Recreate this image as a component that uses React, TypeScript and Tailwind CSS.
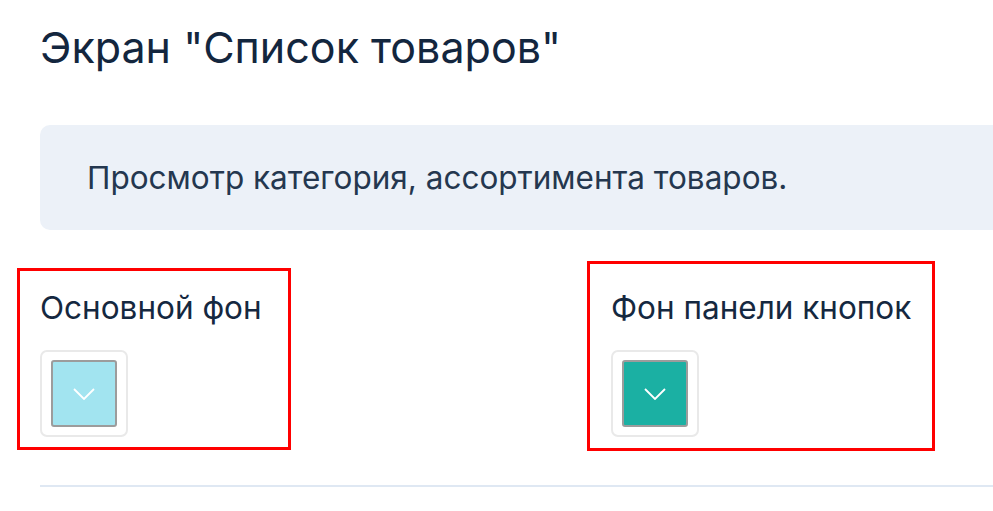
interface ColorFieldProps {
  label: string;
  color: string;
  frame: string;
}

function ColorField({ label, color, frame }: ColorFieldProps) {
  return (
    <div className="relative">
      {/* red annotation frame */}
      <div className={`absolute border-[3px] border-[#ff0000] pointer-events-none ${frame}`} />
      <div className="text-[31.5px] leading-[40px] text-[#152840]">{label}</div>
      <div className="mt-[22px] w-[88px] h-[87px] rounded-[7px] border-2 border-[#e9e9e9] bg-white flex items-center justify-center">
        <div
          className={`w-[66px] h-[67px] rounded-[3px] border-2 border-[#9c9c9c] flex items-center justify-center ${color}`}
        >
          <svg width="22" height="12" viewBox="0 0 22 12" fill="none">
            <polyline points="1,1 11,11 21,1" stroke="white" strokeWidth="1.8" />
          </svg>
        </div>
      </div>
    </div>
  );
}

export default function App() {
  return (
    <div className="w-[993px] h-[511px] overflow-hidden bg-white font-['Inter',sans-serif]">
      <div className="pl-[40px] pt-[19px] w-[1100px]">
        <h1 className="text-[43px] leading-[56px] text-[#13263e] font-normal">
          Экран "Список товаров"
        </h1>
        <div className="mt-[50px] h-[105px] rounded-[10px] bg-[#ecf1f8] flex items-center pl-[47px]">
          <p className="text-[31.5px] text-[#24374f]">Просмотр категория, ассортимента товаров.</p>
        </div>
        <div className="mt-[58px] flex">
          <div className="w-[571px]">
            <ColorField
              label="Основной фон"
              color="bg-[#a2e4f0]"
              frame="-left-[23px] -top-[20px] w-[274px] h-[182px]"
            />
          </div>
          <div>
            <ColorField
              label="Фон панели кнопок"
              color="bg-[#1bb0a3]"
              frame="-left-[24px] -top-[27px] w-[348px] h-[190px]"
            />
          </div>
        </div>
        <div className="mt-[48px] h-[2px] bg-[#dfe8f3]" />
      </div>
    </div>
  );
}
